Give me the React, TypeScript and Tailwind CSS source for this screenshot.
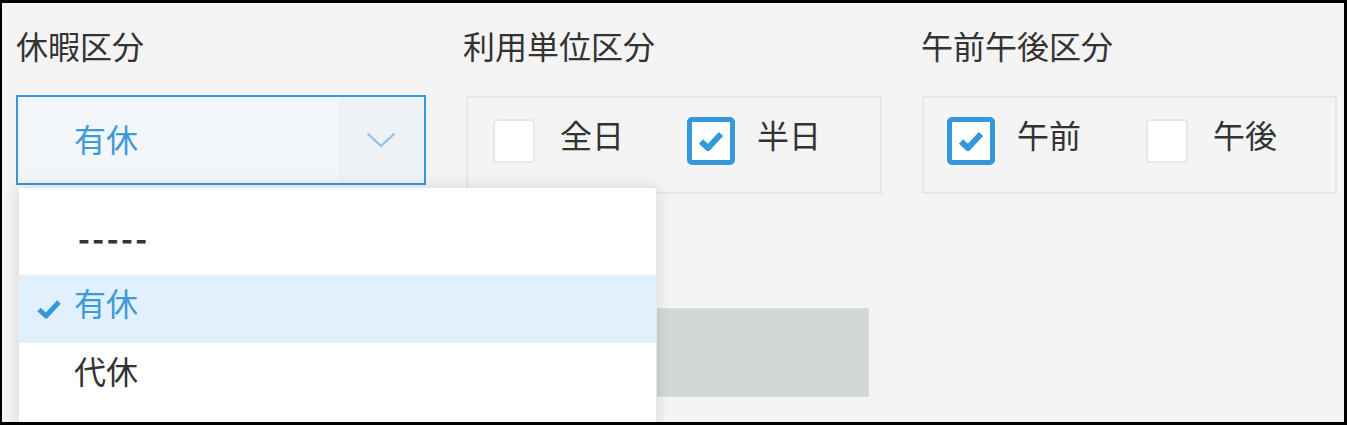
import React from "react";

function Check({ className, width = 5 }: { className?: string; width?: number }) {
  return (
    <svg viewBox="0 0 26 22" className={className} fill="none">
      <polyline points="3,11.5 10,18 23,4" stroke="currentColor" strokeWidth={width} strokeLinejoin="round" />
    </svg>
  );
}

function Checkbox({ checked, label }: { checked: boolean; label: string }) {
  return (
    <div className="flex items-start gap-[22px]">
      <div className="flex h-[48px] w-[48px] items-center justify-center">
        {checked ? (
          <div className="flex h-[48px] w-[48px] items-center justify-center rounded-[5px] border-[5px] border-[#3498db] bg-white text-[#3498db]">
            <Check className="h-[22px] w-[26px]" width={6} />
          </div>
        ) : (
          <div className="h-[44px] w-[42px] rounded-[4px] border-2 border-[#e6e8e9] bg-white" />
        )}
      </div>
      <span className="mt-[1px] text-[32px] leading-none">{label}</span>
    </div>
  );
}

export default function App() {
  const options = [
    { label: "-----", selected: false },
    { label: "有休", selected: true },
    { label: "代休", selected: false },
  ];

  return (
    <div className="h-[425px] w-[1347px] overflow-hidden border-t-[3px] border-r-[3px] border-b-[3px] border-l-2 border-black bg-[#f4f4f4] font-['Noto_Sans_CJK_JP',sans-serif] text-[#333]">
      <div className="flex items-start pl-[14px] pt-[26px]">
        {/* 休暇区分 */}
        <div className="w-[410px]">
          <p className="text-[32px] leading-none">休暇区分</p>
          <div className="relative mt-[34px]">
            <div className="flex h-[90px] border-2 border-[#3498db]">
              <div className="flex flex-1 items-center bg-[#f3f6f8] pb-[5px] pl-[56px] text-[32px] leading-none text-[#3f9ad9]">
                有休
              </div>
              <div className="flex w-[86px] items-center justify-center bg-[#eef2f5] text-[#8dc2e8]">
                <svg viewBox="0 0 30 16" className="h-[16px] w-[30px]" fill="none">
                  <polyline points="1.5,1.5 15,14 28.5,1.5" stroke="currentColor" strokeWidth="2.2" />
                </svg>
              </div>
            </div>

            {/* open dropdown */}
            <div className="absolute left-[2px] top-[calc(100%+2px)] z-10 h-[240px] w-[639px] border border-[#e6e9ea] bg-white pt-[19px] shadow-[0_0_14px_rgba(0,0,0,0.12)]">
              {options.map((o) => (
                <div
                  key={o.label}
                  className={`relative flex h-[68px] items-center pl-[55px] text-[32px] leading-none ${
                    o.selected ? "bg-[#e1f0fd] text-[#3f9ad9]" : "text-[#333]"
                  }`}
                >
                  {o.selected && <Check className="absolute left-[17px] top-[23px] h-[22px] w-[26px] text-[#3498db]" />}
                  <span
                    className={o.label === "-----" ? "-mt-[8px] ml-[4px] font-bold tracking-[2.5px]" : "-mt-[15px]"}
                  >
                    {o.label}
                  </span>
                </div>
              ))}
            </div>
          </div>
        </div>

        {/* 利用単位区分 */}
        <div className="ml-[37px] w-[419px]">
          <p className="text-[32px] leading-none">利用単位区分</p>
          <div className="ml-[3px] mt-[35px] flex h-[98px] w-[416px] gap-[63px] border-2 border-[#e3e7e8] pl-[22px] pt-[19px]">
            <Checkbox checked={false} label="全日" />
            <Checkbox checked label="半日" />
          </div>
          <div className="ml-[3px] mt-[114px] h-[89px] w-[403px] border border-[#dadede] bg-[#d3d7d8]" />
        </div>

        {/* 午前午後区分 */}
        <div className="ml-[39px]">
          <p className="text-[32px] leading-none">午前午後区分</p>
          <div className="ml-[1px] mt-[35px] flex h-[98px] w-[415px] gap-[62px] border-2 border-[#e3e7e8] pl-[23px] pt-[19px]">
            <Checkbox checked label="午前" />
            <Checkbox checked={false} label="午後" />
          </div>
        </div>
      </div>
    </div>
  );
}
